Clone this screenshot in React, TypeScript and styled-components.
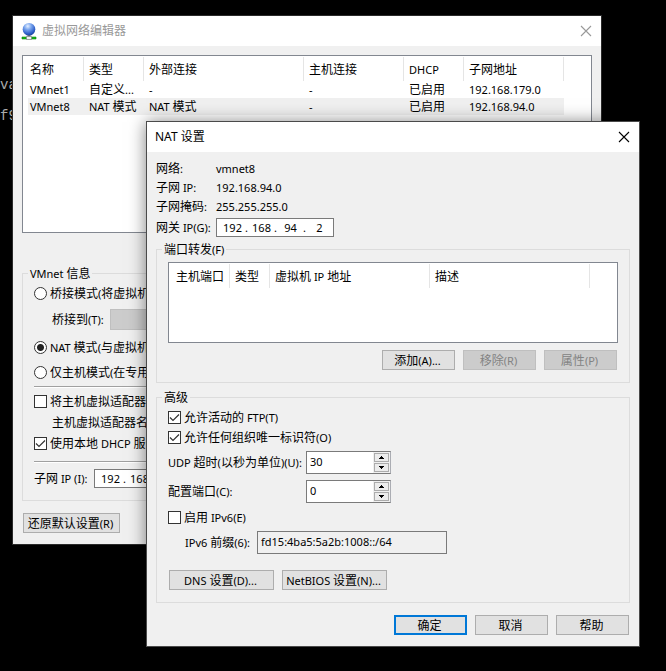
import React from 'react';
import styled, { createGlobalStyle, css } from 'styled-components';

const GlobalStyle = createGlobalStyle`
  *, *::before, *::after { box-sizing: border-box; }
  body {
    margin: 0;
    background: #000;
    color: #000;
    font: 11px/14px "Noto Sans", "Noto Sans CJK SC", sans-serif;
  }
  button, input, select { font: inherit; color: inherit; }
`;

/* Han characters are set one pixel larger than the Latin text around them. */
const Han = styled.span`
  font: 12px/14px "Noto Sans CJK SC", sans-serif;
`;

function T({ children }: { children: string }) {
  return (
    <>
      {children.split(/([\u4e00-\u9fff]+)/).map((part, i) =>
        i % 2 ? <Han key={i}>{part}</Han> : part,
      )}
    </>
  );
}

const Desktop = styled.main`
  position: relative;
  min-height: 100vh;
  min-width: 600px;
  overflow: hidden;
`;

const Terminal = styled.pre`
  margin: 0;
  padding-top: 70px;
  color: #aaa;
  font: 14px/31px "Liberation Mono", monospace;
`;

const Window = styled.section<{ $front?: boolean }>`
  position: absolute;
  top: ${(p) => (p.$front ? 121 : 15)}px;
  left: ${(p) => (p.$front ? 146 : 12)}px;
  right: ${(p) => (p.$front ? 26 : 64)}px;
  border: 1px solid ${(p) => (p.$front ? '#4a4a4a' : '#2a2a2a')};
  background: #f0f0f0;
  white-space: nowrap;
  overflow: hidden;
  ${(p) => p.$front && css`box-shadow: 0 1px 16px rgba(0, 0, 0, 0.5);`}
`;

const TitleBar = styled.header<{ $inactive?: boolean }>`
  display: flex;
  align-items: center;
  gap: 5px;
  height: 30px;
  padding: 0 8px;
  background: #fff;
  color: ${(p) => (p.$inactive ? '#999' : '#000')};
`;

const Title = styled.h1`
  flex: 1;
  margin: 0;
  font: 12px/16px "Noto Sans", "Noto Sans CJK SC", sans-serif;
`;

const CloseButton = styled.button`
  display: flex;
  padding: 1px;
  border: 0;
  background: none;
`;

const Body = styled.div`
  display: flex;
  flex-direction: column;
  padding: 7px 9px 11px;
`;

const ListBox = styled.div<{ $height: number; $top: number }>`
  height: ${(p) => p.$height}px;
  margin-top: ${(p) => p.$top}px;
  padding-left: 5px;
  border: 1px solid #828790;
  background: #fff;
  overflow: hidden;
`;

const Table = styled.table`
  table-layout: fixed;
  width: 0;
  border-collapse: collapse;
  th, td {
    padding: 0 0 0 5px;
    text-align: left;
    font-weight: normal;
    overflow: hidden;
  }
  th:first-child, td:first-child { padding-left: 2px; }
  th {
    height: 25px;
    padding-top: 2px;
    background: linear-gradient(#e5e5e5, #e5e5e5) right 1px / 1px 24px no-repeat;
  }
  td { height: 17px; }
`;

const TableRow = styled.tr<{ $selected?: boolean }>`
  background: ${(p) => (p.$selected ? '#f0f0f0' : 'none')};
`;

const Group = styled.fieldset<{ $top: number }>`
  min-width: 0;
  margin: ${(p) => p.$top}px 0 0;
  padding: 0 11px 12px;
  border: 1px solid #dcdcdc;
`;

const Legend = styled.legend`
  height: 14px;
  margin-left: -6px;
  padding: 0 2px;
`;

const Row = styled.div<{ $top?: number; $indent?: number; $height?: number }>`
  display: flex;
  align-items: center;
  height: ${(p) => p.$height ?? 20}px;
  margin-top: ${(p) => p.$top ?? 0}px;
  padding-left: ${(p) => p.$indent ?? 0}px;
`;

const Caption = styled.label<{ $width: number }>`
  flex: none;
  width: ${(p) => p.$width}px;
`;

const Choice = styled.label`
  display: flex;
  align-items: center;
  gap: 3px;
`;

const Radio = styled.input.attrs({ type: 'radio' })`
  appearance: none;
  width: 13px;
  height: 13px;
  margin: 0;
  border: 1px solid #333;
  border-radius: 50%;
  background: #fff;
  &:checked { background: radial-gradient(circle, #222 3px, #fff 4px); }
`;

const CheckWrap = styled.span`
  display: grid;
  width: 13px;
  height: 13px;
  > * { grid-area: 1 / 1; }
  svg { pointer-events: none; }
`;

const CheckInput = styled.input.attrs({ type: 'checkbox' })`
  appearance: none;
  width: 13px;
  height: 13px;
  margin: 0;
  border: 1px solid #333;
  background: #fff;
  & + svg { visibility: hidden; }
  &:checked + svg { visibility: visible; }
`;

const Separator = styled.hr<{ $top: number }>`
  width: 100%;
  height: 2px;
  margin: ${(p) => p.$top}px 0 0;
  border: 0;
  border-top: 1px solid #a0a0a0;
  background: #fff;
`;

const BridgeSelect = styled.select`
  appearance: none;
  flex: 1;
  height: 21px;
  border: 1px solid #bfbfbf;
  background: #ccc;
  opacity: 1;
`;

const IpBox = styled.div`
  display: flex;
  align-items: center;
  width: 118px;
  height: 19px;
  padding-left: 3px;
  border: 1px solid #7a7a7a;
  background: #fff;
`;

const IpPart = styled.input`
  width: 25px;
  height: 15px;
  padding: 0;
  border: 0;
  background: none;
  text-align: center;
`;

const IpDot = styled.span`
  width: 4px;
`;

const Spin = styled.div`
  display: flex;
  width: 85px;
  height: 23px;
  border: 1px solid #7a7a7a;
  border-right-color: #abadb3;
  background: #fff;
`;

const SpinInput = styled.input`
  flex: 1;
  min-width: 0;
  padding: 0 3px 2px;
  border: 0;
  background: none;
`;

const SpinArrows = styled.div`
  display: flex;
  flex-direction: column;
  gap: 1px;
  width: 17px;
  padding: 1px;
  background: #f0f0f0;
`;

const SpinButton = styled.button`
  display: flex;
  flex: 1;
  align-items: center;
  justify-content: center;
  padding: 0;
  border: 1px solid #acacac;
  background: #ececec;
`;

const PrefixInput = styled.input`
  width: 190px;
  height: 23px;
  padding: 0 3px 2px;
  border: 1px solid #7a7a7a;
  background: #f0f0f0;
`;

const Buttons = styled.div<{ $top: number; $end?: boolean }>`
  display: flex;
  justify-content: ${(p) => (p.$end ? 'flex-end' : 'flex-start')};
  gap: 8px;
  margin-top: ${(p) => p.$top}px;
  padding: 0 1px;
`;

const Button = styled.button<{ $width?: number; $primary?: boolean }>`
  width: ${(p) => p.$width ?? 73}px;
  height: 20px;
  padding: 0 2px 0 0;
  border: ${(p) => (p.$primary ? '2px solid #0078d7' : '1px solid #adadad')};
  background: #e1e1e1;
  line-height: 14px;
  &:disabled {
    border-color: #bfbfbf;
    background: #ccc;
    color: #838383;
  }
`;

function CloseIcon({ color }: { color: string }) {
  return (
    <svg width="12" height="12" viewBox="0 0 12 12" stroke={color} strokeWidth="1.1" fill="none">
      <path d="M1 1 11 11M11 1 1 11" />
    </svg>
  );
}

function GlobeIcon() {
  return (
    <svg width="16" height="17" viewBox="0 0 16 17">
      <defs>
        <radialGradient id="globe" cx="0.4" cy="0.25" r="0.8">
          <stop offset="0" stopColor="#e4efff" />
          <stop offset="0.35" stopColor="#7ba6ee" />
          <stop offset="0.75" stopColor="#2f5fc8" />
          <stop offset="1" stopColor="#173a92" />
        </radialGradient>
      </defs>
      <path d="M6.500 11.500h3v2h-3z" fill="#777" />
      <circle cx="8" cy="6.300" r="6.300" fill="url(#globe)" />
      <path d="M1 14h14v2H1z" fill="#18b818" stroke="#0a7f0a" strokeWidth=".6" />
      <path d="M5.500 13.500h5v3h-5z" fill="#f2f2f2" stroke="#777" strokeWidth=".6" />
    </svg>
  );
}

function Arrow({ up }: { up?: boolean }) {
  return (
    <svg width="5" height="3" viewBox="0 0 5 3" shapeRendering="crispEdges">
      <path d={up ? 'M2 0h1v1h1v1h1v1H0V2h1V1h1z' : 'M0 0h5v1H4v1H3v1H2V2H1V1H0z'} />
    </svg>
  );
}

function Check({ label, checked }: { label: string; checked?: boolean }) {
  return (
    <Choice>
      <CheckWrap>
        <CheckInput defaultChecked={checked} />
        <svg width="13" height="13" viewBox="0 0 13 13" fill="none" stroke="#333" strokeWidth="1.2">
          <path d="M2 6.500 5 9.500 11 3.500" />
        </svg>
      </CheckWrap>
      <span><T>{label}</T></span>
    </Choice>
  );
}

function Mode({ label, checked }: { label: string; checked?: boolean }) {
  return (
    <Choice>
      <Radio name="mode" defaultChecked={checked} />
      <span><T>{label}</T></span>
    </Choice>
  );
}

function IpField({ id, name, parts }: { id: string; name: string; parts: string[] }) {
  return (
    <IpBox role="group" aria-label={name}>
      {parts.map((part, i) => (
        <React.Fragment key={i}>
          {i > 0 && <IpDot>.</IpDot>}
          <IpPart id={i ? undefined : id} aria-label={`${name} ${i + 1}`} defaultValue={part} />
        </React.Fragment>
      ))}
    </IpBox>
  );
}

function SpinField({ id, value }: { id: string; value: string }) {
  return (
    <Spin>
      <SpinInput id={id} defaultValue={value} />
      <SpinArrows>
        <SpinButton aria-label="增加"><Arrow up /></SpinButton>
        <SpinButton aria-label="减少"><Arrow /></SpinButton>
      </SpinArrows>
    </Spin>
  );
}

function List({ heads, widths, rows = [], selected }: {
  heads: string[];
  widths: number[];
  rows?: string[][];
  selected?: number;
}) {
  return (
    <Table>
      <colgroup>{widths.map((w, i) => <col key={i} width={w} />)}</colgroup>
      <thead>
        <tr>{heads.map((h) => <th key={h} scope="col"><T>{h}</T></th>)}</tr>
      </thead>
      <tbody>
        {rows.map((row, i) => (
          <TableRow key={row[0]} $selected={i === selected}>
            {row.map((cell, j) => <td key={j}><T>{cell}</T></td>)}
          </TableRow>
        ))}
      </tbody>
    </Table>
  );
}

function EditorWindow() {
  return (
    <Window>
      <TitleBar $inactive>
        <GlobeIcon />
        <Title>虚拟网络编辑器</Title>
        <CloseButton aria-label="关闭"><CloseIcon color="#999" /></CloseButton>
      </TitleBar>
      <Body>
        <ListBox $height={178} $top={2}>
          <List
            heads={['名称', '类型', '外部连接', '主机连接', 'DHCP', '子网地址']}
            widths={[56, 60, 160, 100, 60, 100]}
            rows={[
              ['VMnet1', '自定义...', '-', '-', '已启用', '192.168.179.0'],
              ['VMnet8', 'NAT 模式', 'NAT 模式', '-', '已启用', '192.168.94.0'],
            ]}
            selected={1}
          />
        </ListBox>
        <Group $top={33}>
          <Legend><T>VMnet 信息</T></Legend>
          <Row $top={3}><Mode label="桥接模式(将虚拟机" /></Row>
          <Row $top={6} $indent={18} $height={21}>
            <Caption htmlFor="bridge" $width={58}><T>桥接到(T):</T></Caption>
            <BridgeSelect id="bridge" disabled />
          </Row>
          <Row $top={7}><Mode label="NAT 模式(与虚拟机" checked /></Row>
          <Row $top={5}><Mode label="仅主机模式(在专用" /></Row>
          <Separator $top={4} />
          <Row $top={3}><Check label="将主机虚拟适配器连" /></Row>
          <Row $top={1} $indent={18}><span><T>主机虚拟适配器名</T></span></Row>
          <Row $top={1}><Check label="使用本地 DHCP 服务" checked /></Row>
          <Separator $top={8} />
          <Row $top={6} $height={19}>
            <Caption htmlFor="subnet" $width={60}><T>子网 IP (I):</T></Caption>
            <IpField id="subnet" name="子网 IP" parts={['192', '168', '94', '0']} />
          </Row>
        </Group>
        <Buttons $top={12}>
          <Button $width={97}><T>还原默认设置(R)</T></Button>
        </Buttons>
      </Body>
    </Window>
  );
}

function NatWindow() {
  return (
    <Window $front>
      <TitleBar>
        <Title>NAT 设置</Title>
        <CloseButton aria-label="关闭"><CloseIcon color="#000" /></CloseButton>
      </TitleBar>
      <Body>
        {[
          ['网络:', 'vmnet8'],
          ['子网 IP:', '192.168.94.0'],
          ['子网掩码:', '255.255.255.0'],
        ].map(([name, value]) => (
          <Row key={name} $height={19}>
            <Caption as="span" $width={60}><T>{name}</T></Caption>
            <span>{value}</span>
          </Row>
        ))}
        <Row $top={2} $height={19}>
          <Caption htmlFor="gateway" $width={60}><T>网关 IP(G):</T></Caption>
          <IpField id="gateway" name="网关 IP" parts={['192', '168', '94', '2']} />
        </Row>
        <Group $top={5}>
          <Legend><T>端口转发(F)</T></Legend>
          <ListBox $height={81} $top={6}>
            <List heads={['主机端口', '类型', '虚拟机 IP 地址', '描述']} widths={[56, 40, 160, 160]} />
          </ListBox>
          <Buttons $top={7} $end>
            <Button><T>添加(A)...</T></Button>
            <Button disabled><T>移除(R)</T></Button>
            <Button disabled><T>属性(P)</T></Button>
          </Buttons>
        </Group>
        <Group $top={7}>
          <Legend><T>高级</T></Legend>
          <Row $top={3}><Check label="允许活动的 FTP(T)" checked /></Row>
          <Row><Check label="允许任何组织唯一标识符(O)" checked /></Row>
          <Row $top={4} $height={23}>
            <Caption htmlFor="udp" $width={138}><T>UDP 超时(以秒为单位)(U):</T></Caption>
            <SpinField id="udp" value="30" />
          </Row>
          <Row $top={6} $height={23}>
            <Caption htmlFor="port" $width={138}><T>配置端口(C):</T></Caption>
            <SpinField id="port" value="0" />
          </Row>
          <Row $top={4}><Check label="启用 IPv6(E)" /></Row>
          <Row $top={4} $indent={17} $height={23}>
            <Caption htmlFor="prefix" $width={72}><T>IPv6 前缀(6):</T></Caption>
            <PrefixInput id="prefix" readOnly defaultValue="fd15:4ba5:5a2b:1008::/64" />
          </Row>
          <Buttons $top={16}>
            <Button $width={105}><T>DNS 设置(D)...</T></Button>
            <Button $width={105}><T>NetBIOS 设置(N)...</T></Button>
          </Buttons>
        </Group>
        <Buttons $top={12} $end>
          <Button $primary><T>确定</T></Button>
          <Button><T>取消</T></Button>
          <Button><T>帮助</T></Button>
        </Buttons>
      </Body>
    </Window>
  );
}

export default function App() {
  return (
    <>
      <GlobalStyle />
      <Desktop>
        <Terminal>{'va\nf9'}</Terminal>
        <EditorWindow />
        <NatWindow />
      </Desktop>
    </>
  );
}
